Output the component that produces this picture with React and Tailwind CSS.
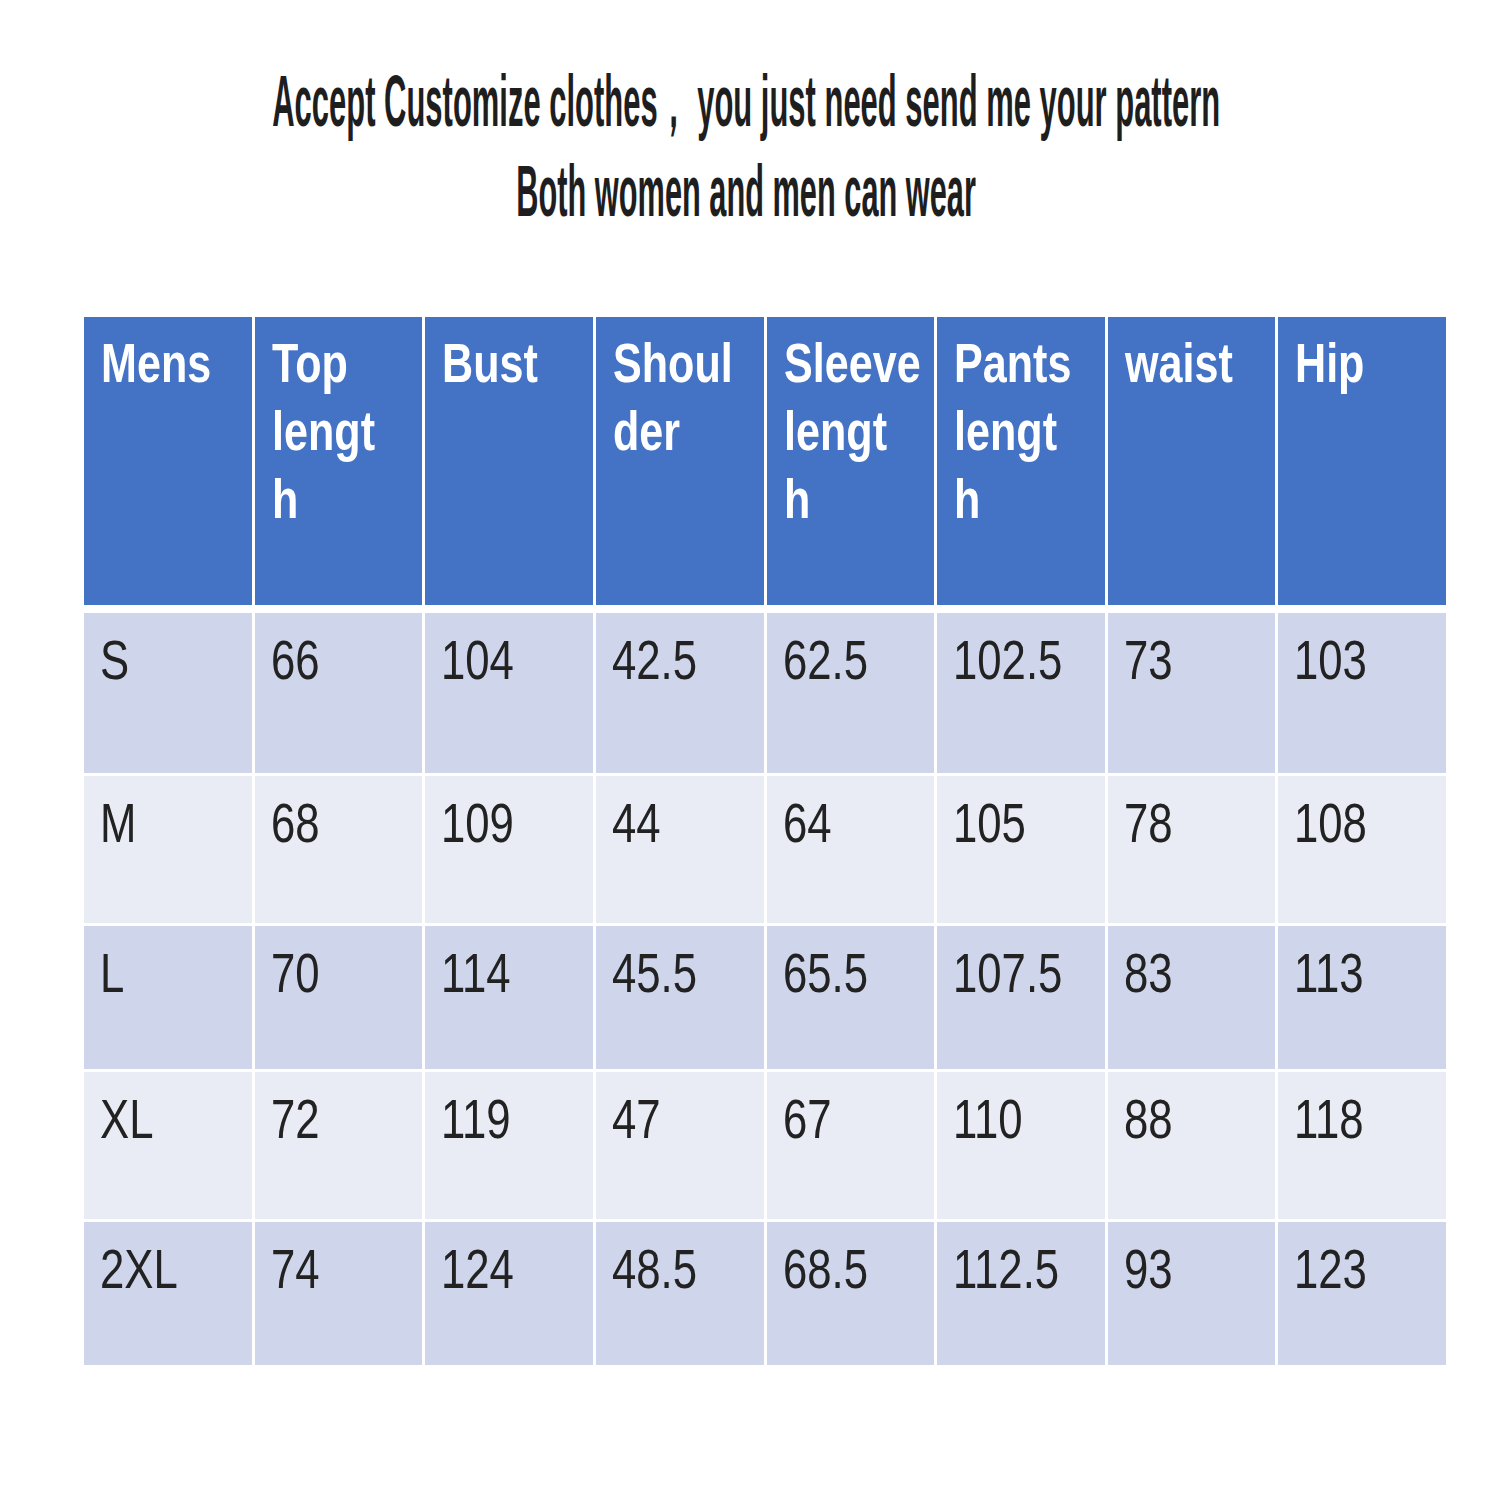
import React from "react";

const headers = [
  ["Mens"],
  ["Top", "lengt", "h"],
  ["Bust"],
  ["Shoul", "der"],
  ["Sleeve", "lengt", "h"],
  ["Pants", "lengt", "h"],
  ["waist"],
  ["Hip"],
];

const rows = [
  { h: "h-[160px]", bg: "bg-[#cfd5ea]", cells: ["S", "66", "104", "42.5", "62.5", "102.5", "73", "103"] },
  { h: "h-[147px]", bg: "bg-[#e9ebf5]", cells: ["M", "68", "109", "44", "64", "105", "78", "108"] },
  { h: "h-[143px]", bg: "bg-[#cfd5ea]", cells: ["L", "70", "114", "45.5", "65.5", "107.5", "83", "113"] },
  { h: "h-[147px]", bg: "bg-[#e9ebf5]", cells: ["XL", "72", "119", "47", "67", "110", "88", "118"] },
  { h: "h-[143px]", bg: "bg-[#cfd5ea]", cells: ["2XL", "74", "124", "48.5", "68.5", "112.5", "93", "123"] },
];

const sans = "font-['Liberation_Sans',Arial,sans-serif]";

const App = () => {
  return (
    <div className="w-[1500px] h-[1500px] bg-white overflow-hidden">
      <div className={`pt-[56px] pr-[8px] flex flex-col items-center text-[#1e1e1e] font-bold text-[72px] leading-[90px] ${sans}`}>
        <div className="flex justify-center w-full">
          <span className="inline-block whitespace-pre scale-x-[0.43] origin-center">
            Accept Customize clothes， you just need send me your pattern
          </span>
        </div>
        <div className="flex justify-center w-full">
          <span className="inline-block whitespace-pre scale-x-[0.427] origin-center">
            Both women and men can wear
          </span>
        </div>
      </div>

      <div className={`mt-[81px] ml-[84px] w-[1362px] flex flex-col ${sans}`}>
        <div className="grid grid-cols-8 gap-x-[3px] h-[288px]">
          {headers.map((lines, i) => (
            <div key={i} className="bg-[#4472c4] pl-[17px] pt-[12px] text-white font-bold text-[56px] leading-[68px]">
              {lines.map((l, j) => (
                <div key={j} className="whitespace-nowrap">
                  <span className="inline-block scale-x-[0.77] origin-left">{l}</span>
                </div>
              ))}
            </div>
          ))}
        </div>

        <div className="mt-[8px] flex flex-col gap-y-[3px]">
          {rows.map((r, i) => (
            <div key={i} className={`grid grid-cols-8 gap-x-[3px] ${r.h}`}>
              {r.cells.map((c, j) => (
                <div key={j} className={`${r.bg} pl-[16px] pt-[16px] text-[#222222] text-[56px] leading-[62px] whitespace-nowrap`}>
                  <span className="inline-block scale-x-[0.78] origin-left">{c}</span>
                </div>
              ))}
            </div>
          ))}
        </div>
      </div>
    </div>
  );
};

export default App;
